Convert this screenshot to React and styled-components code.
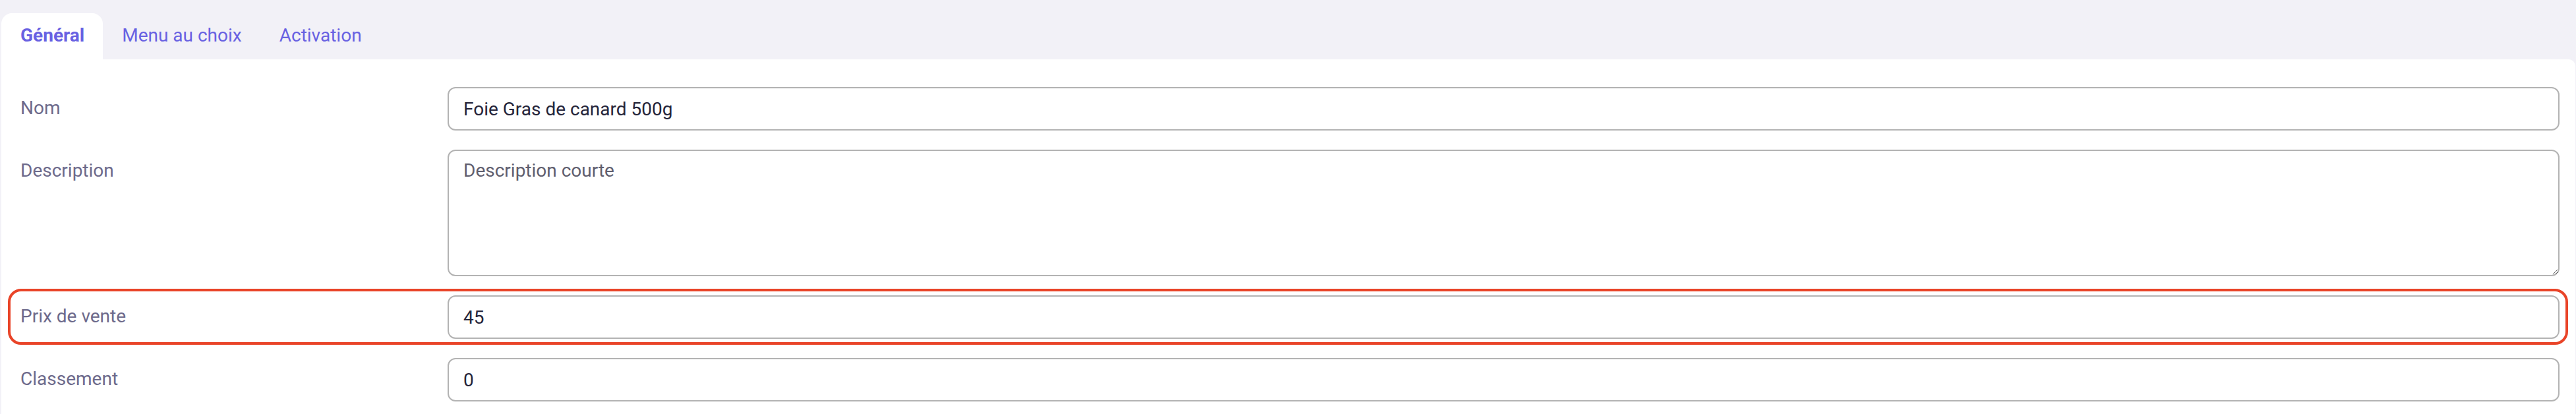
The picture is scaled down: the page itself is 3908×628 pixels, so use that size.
import React, { useState } from "react";
import styled, { createGlobalStyle } from "styled-components";

const GlobalStyle = createGlobalStyle`
  html, body {
    margin: 0;
    padding: 0;
    background: #f2f1f7;
  }
  body {
    font-family: Roboto, "Liberation Sans", Arial, sans-serif;
  }
  * {
    box-sizing: border-box;
  }
`;

const TABS = ["Général", "Menu au choix", "Activation"];

const FIELDS = [
  { name: "nom", label: "Nom", value: "Foie Gras de canard 500g" },
  { name: "description", label: "Description", placeholder: "Description courte", multiline: true },
  { name: "prix", label: "Prix de vente", value: "45", highlighted: true },
  { name: "classement", label: "Classement", value: "0" },
];

export default function App() {
  //state
  const [activeTab, setActiveTab] = useState(0);
  const [values, setValues] = useState(
    FIELDS.reduce((acc, f) => ({ ...acc, [f.name]: f.value || "" }), {})
  );

  //functionement
  const handleChange = (e) => {
    setValues({ ...values, [e.target.name]: e.target.value });
  };

  // affichage
  return (
    <Page>
      <GlobalStyle />
      <TabBar>
        {TABS.map((label, index) => (
          <Tab
            key={label}
            $active={index === activeTab}
            onClick={() => setActiveTab(index)}
          >
            {label}
          </Tab>
        ))}
      </TabBar>
      <Card>
        {FIELDS.map(({ name, label, placeholder, multiline, highlighted }) => (
          <Row key={name}>
            {highlighted && <Highlight />}
            <Label htmlFor={name}>{label}</Label>
            {multiline ? (
              <TextArea
                id={name}
                name={name}
                placeholder={placeholder}
                value={values[name]}
                onChange={handleChange}
              />
            ) : (
              <TextInput
                id={name}
                name={name}
                value={values[name]}
                onChange={handleChange}
              />
            )}
          </Row>
        ))}
      </Card>
    </Page>
  );
}

const Page = styled.div`
  display: flex;
  flex-direction: column;
  min-height: 628px;
  padding: 0 1px 0 2px;
`;

const TabBar = styled.nav`
  display: flex;
  align-items: flex-end;
  height: 90px;
`;

const Tab = styled.button`
  height: 70px;
  padding: 17px 28px 0 29px;
  border: none;
  border-radius: 16px 16px 0 0;
  background: ${({ $active }) => ($active ? "#ffffff" : "transparent")};
  color: #6861e2;
  font-family: Roboto, "Liberation Sans", Arial, sans-serif;
  font-size: 28px;
  font-weight: ${({ $active }) => ($active ? 700 : 400)};
  line-height: normal;
  text-align: left;
  display: flex;
  align-items: flex-start;
  cursor: pointer;
`;

const Card = styled.form`
  flex: 1;
  display: flex;
  flex-direction: column;
  gap: 29px;
  padding: 42px 24px 19px 29px;
  background: #ffffff;
  border-radius: 0 10px 0 0;
`;

const Row = styled.div`
  position: relative;
  display: grid;
  grid-template-columns: 648px 1fr;
  align-items: start;
`;

const Highlight = styled.div`
  position: absolute;
  top: -10px;
  bottom: -9px;
  left: -19px;
  right: -13px;
  border: 4px solid #e94428;
  border-radius: 20px;
  pointer-events: none;
`;

const Label = styled.label`
  padding-top: 15px;
  font-size: 28px;
  line-height: normal;
  color: #6d6a8b;
`;

const fieldStyles = `
  width: 100%;
  border: 2px solid #b3b3b3;
  border-radius: 12px;
  background: #ffffff;
  font-family: Roboto, "Liberation Sans", Arial, sans-serif;
  font-size: 28px;
  color: #25253a;
  outline: none;
`;

const TextInput = styled.input`
  ${fieldStyles}
  height: 66px;
  padding: 0 22px;
  line-height: normal;
`;

const TextArea = styled.textarea`
  ${fieldStyles}
  display: block;
  height: 192px;
  padding: 13px 22px;
  line-height: normal;
  resize: vertical;

  &::placeholder {
    color: #5f5e6e;
    opacity: 1;
  }
`;
